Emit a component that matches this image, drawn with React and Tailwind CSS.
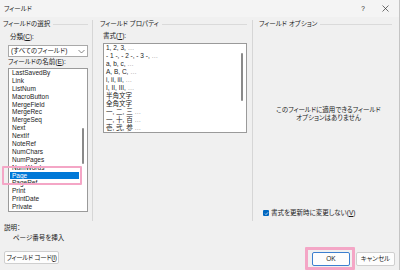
const fieldNames = [
  'LastSavedBy', 'Link', 'ListNum', 'MacroButton', 'MergeField', 'MergeRec',
  'MergeSeq', 'Next', 'NextIf', 'NoteRef', 'NumChars', 'NumPages', 'NumWords',
  'Page', 'PageRef', 'Print', 'PrintDate', 'Private',
]

const formats = [
  ['1, 2, 3, ', true],
  ['- 1 -, - 2 -, - 3 -, ', true],
  ['a, b, c, ', true],
  ['A, B, C, ', true],
  ['i, ii, iii, ', true],
  ['I, II, III, ', true],
  ['半角文字', false],
  ['全角文字', false],
  ['一, 二, 三 ', true],
  ['一, 十, 百 ', true],
  ['壱, 弐, 参 ', true],
]

function GroupLabel({ children }) {
  return (
    <div className="flex items-center gap-[3px] h-[8px]">
      <span className="whitespace-nowrap">{children}</span>
      <div className="flex-1 h-px bg-[#dadada]" />
    </div>
  )
}

function Btn({ children, primary, className = '' }) {
  return (
    <div
      className={`flex items-center justify-center whitespace-nowrap rounded-[2px] bg-[#fdfdfd] border ${
        primary ? 'border-[#3b7fcf]' : 'border-[#cfcfcf]'
      } ${className}`}
    >
      {children}
    </div>
  )
}

export default function App() {
  return (
    <div
      className="relative w-[400px] h-[270px] bg-[#f0f0f0] text-[#1b1b1b] text-[6.5px] leading-[8px] overflow-hidden border-r border-[#c4c4c4] [font-feature-settings:'palt']"
      style={{ fontFamily: '"Liberation Sans", "Noto Sans CJK JP", sans-serif' }}
    >
      {/* Title bar */}
      <div className="h-[17px] bg-[#f4f4f4] flex items-center pl-[4px]">
        <span className="flex-1">フィールド</span>
        <span className="w-[10px] text-center mr-[14px]">?</span>
        <svg width="7" height="7" viewBox="0 0 7 7" className="mr-[10px]">
          <path d="M0.5 0.5 L6.5 6.5 M6.5 0.5 L0.5 6.5" stroke="#333" strokeWidth="0.7" />
        </svg>
      </div>

      {/* Columns */}
      <div className="flex h-[204px] pt-[3px]">
        {/* Field selection */}
        <div className="w-[93px] pl-[3px] pr-[4px] border-r border-[#d6d6d6]">
          <GroupLabel>フィールドの選択</GroupLabel>
          <div className="mt-[5px] pl-[7px]">
            分類(<span className="underline">C</span>):
          </div>
          <div className="mt-[4px] ml-[5px] h-[12px] bg-white border border-[#a9a9a9] flex items-center pl-[2px] pr-[2px]">
            <span className="flex-1">(すべてのフィールド)</span>
            <svg width="7" height="5" viewBox="0 0 7 5">
              <path d="M0.5 1 L3.5 4 L6.5 1" fill="none" stroke="#555" strokeWidth="0.7" />
            </svg>
          </div>
          <div className="mt-[1px] pl-[5px]">
            フィールドの名前(<span className="underline">E</span>):
          </div>
          <div className="mt-[2px] ml-[5px] h-[144px] bg-white border border-[#9a9a9a] flex overflow-hidden">
            <div className="flex-1 pl-[1px]">
              {fieldNames.map(n => (
                <div
                  key={n}
                  className={`h-[7.9px] leading-[7.9px] pl-[2px] ${n === 'Page' ? 'bg-[#0078d7] text-white' : ''}`}
                >
                  {n}
                </div>
              ))}
            </div>
            <div className="w-[8px] flex justify-center">
              <div className="mt-[59px] w-[2px] h-[36px] bg-[#8a8a8a] rounded-full" />
            </div>
          </div>
        </div>

        {/* Field properties */}
        <div className="w-[160px] pl-[7px] pr-[5px] border-r border-[#d6d6d6]">
          <GroupLabel>フィールド プロパティ</GroupLabel>
          <div className="mt-[4px] pl-[3px]">
            書式(<span className="underline">T</span>):
          </div>
          <div className="mt-[3px] ml-[3px] h-[90px] bg-white border border-[#9a9a9a] flex overflow-hidden">
            <div className="flex-1 pl-[2px]">
              {formats.map(([t, more]) => (
                <div key={t} className="h-[8px] whitespace-nowrap">
                  {t}
                  {more && <span className="text-[#9a9a9a]">…</span>}
                </div>
              ))}
            </div>
            <div className="w-[8px] flex justify-center">
              <div className="mt-[9px] w-[2px] h-[48px] bg-[#8a8a8a] rounded-full" />
            </div>
          </div>
        </div>

        {/* Field options */}
        <div className="flex-1 pl-[6px] pr-[7px]">
          <GroupLabel>フィールド オプション</GroupLabel>
          <div className="mt-[78px] text-center pl-[6px]">
            <div>このフィールドに適用できるフィールド</div>
            <div>オプションはありません</div>
          </div>
          <div className="mt-[87px] pl-[4px] flex items-center gap-[2px]">
            <div className="w-[6px] h-[6px] rounded-[1px] bg-[#0067c0] flex items-center justify-center">
              <svg width="5" height="5" viewBox="0 0 5 5">
                <path d="M1 2.6 L2 3.6 L4 1.4" fill="none" stroke="#fff" strokeWidth="0.7" />
              </svg>
            </div>
            <span>
              書式を更新時に変更しない(<span className="underline">V</span>)
            </span>
          </div>
        </div>
      </div>

      {/* Description */}
      <div className="mt-[3px] pl-[4px]">説明：</div>
      <div className="mt-[2px] pl-[13px]">ページ番号を挿入</div>

      {/* Buttons */}
      <div className="mt-[9px] flex items-start pl-[4px] pr-[4px]">
        <Btn className="w-[55px] h-[13px] tracking-[-0.3px]">
          フィールド コード(<span className="underline">I</span>)
        </Btn>
        <div className="flex-1" />
        <Btn primary className="w-[38px] h-[14px] mt-[1px]">OK</Btn>
        <Btn className="w-[39px] h-[14px] mt-[1px] ml-[6px]">キャンセル</Btn>
      </div>

      {/* Pink annotation boxes */}
      <div className="absolute left-[2px] top-[166px] w-[80px] h-[19px] border-2 border-[#f4a6c6] rounded-[1px]" />
      <div className="absolute left-[305px] top-[247px] w-[50px] h-[23px] border-[3px] border-[#f4a6c6] rounded-[1px]" />
    </div>
  )
}
